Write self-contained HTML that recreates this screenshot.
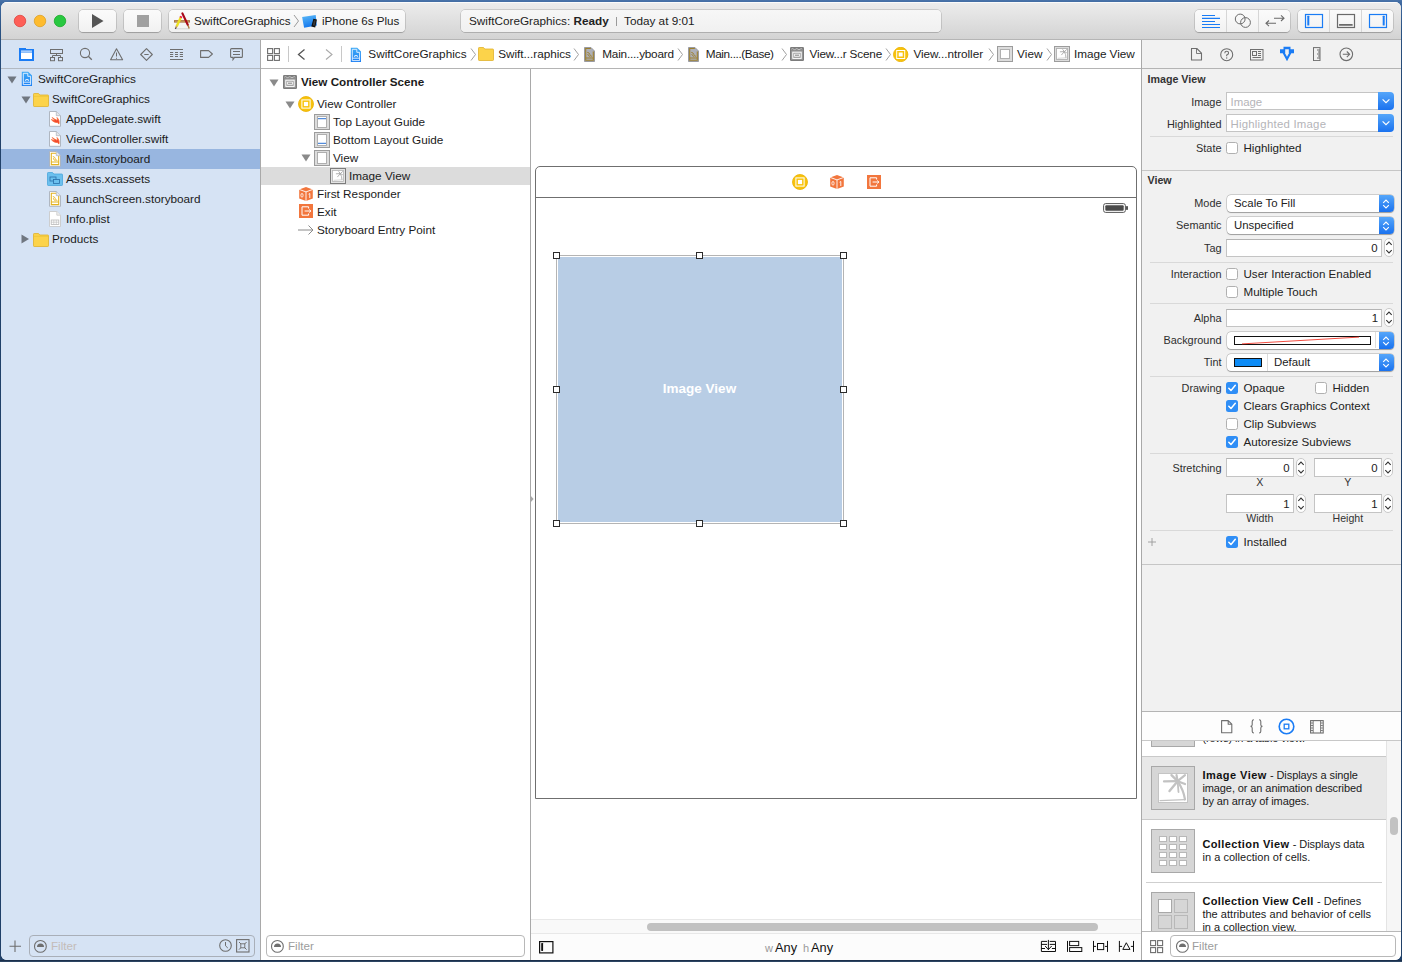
<!DOCTYPE html><html><head><meta charset="utf-8"><style>
*{margin:0;padding:0;box-sizing:border-box}
html,body{width:1402px;height:962px;overflow:hidden}
body{background:linear-gradient(to bottom,transparent 960px,#1b2f4b 960px,#1b2f4b 961px,#2c4563 961px),linear-gradient(#4a74aa 0px,#3f69a0 3px,#2a5282 30px,#214169 120px,#204068 100%);font-family:"Liberation Sans", sans-serif;position:relative}
.a{position:absolute}
.t{position:absolute;white-space:pre;line-height:20px;font-family:"Liberation Sans", sans-serif}
#win{position:absolute;left:1px;top:2px;width:1400px;height:958px;border-radius:6px;overflow:hidden;background:#fff}
#in{position:absolute;left:-1px;top:-2px;width:1402px;height:962px}
</style></head><body><div id="win"><div id="in">
<div class="a" style="left:0px;top:0px;width:1402px;height:39px;background:linear-gradient(#ececec 8%,#e6e6e6 30%,#d3d3d3)"></div>
<div class="a" style="left:0px;top:39px;width:1402px;height:1px;background:#b5b5b5"></div>
<div class="a" style="left:0px;top:2px;width:1402px;height:1px;background:#fbfbfb"></div>
<svg class="a" style="left:13px;top:14px;" width="14" height="14" viewBox="0 0 14 14"><circle cx="7" cy="7" r="5.75" fill="#fe5f57" stroke="#e0443e" stroke-width="0.8"/></svg>
<svg class="a" style="left:33px;top:14px;" width="14" height="14" viewBox="0 0 14 14"><circle cx="7" cy="7" r="5.75" fill="#febb2e" stroke="#dea123" stroke-width="0.8"/></svg>
<svg class="a" style="left:53px;top:14px;" width="14" height="14" viewBox="0 0 14 14"><circle cx="7" cy="7" r="5.75" fill="#28c840" stroke="#1aab29" stroke-width="0.8"/></svg>
<div class="a" style="left:79px;top:10px;width:37px;height:22px;border-radius:4px;background:linear-gradient(#fbfbfb,#f1f1f1);box-shadow:0 0 0 0.5px rgba(0,0,0,0.22),0 0.5px 1px rgba(0,0,0,0.18)"></div>
<svg class="a" style="left:92px;top:14px;" width="12" height="14" viewBox="0 0 12 14"><path d="M0 0 L11.5 7 L0 14Z" fill="#555"/></svg>
<div class="a" style="left:124px;top:10px;width:37px;height:22px;border-radius:4px;background:linear-gradient(#fbfbfb,#f1f1f1);box-shadow:0 0 0 0.5px rgba(0,0,0,0.22),0 0.5px 1px rgba(0,0,0,0.18)"></div>
<div class="a" style="left:137px;top:15px;width:12px;height:12px;background:#a0a0a0"></div>
<div class="a" style="left:169px;top:10px;width:236px;height:22px;border-radius:4px;background:linear-gradient(#fbfbfb,#f1f1f1);box-shadow:0 0 0 0.5px rgba(0,0,0,0.22),0 0.5px 1px rgba(0,0,0,0.18)"></div>
<svg class="a" style="left:170px;top:10px;" width="22" height="22" viewBox="0 0 22 22"><path d="M5 18.8 H19.5" stroke="#d0d0d0" stroke-width="0.9"/><rect x="4" y="10.1" width="16" height="2.5" fill="#a87440"/><rect x="5" y="10.9" width="14" height="0.9" fill="#c89a62"/><path d="M12.4 3.4 L17.8 14.9" stroke="#a80818" stroke-width="2.2" stroke-linecap="round"/><path d="M17.9 15.2 L19.2 18.6" stroke="#b07a40" stroke-width="1.4"/><path d="M10.9 7.2 L6.6 16.4" stroke="#ece020" stroke-width="2.4"/><path d="M11.3 6.3 L10.6 7.8" stroke="#f02050" stroke-width="2.5"/><path d="M6.6 16.4 L5.9 17.8" stroke="#b88a5a" stroke-width="1.8"/><path d="M5.9 17.8 L5.3 18.6" stroke="#222" stroke-width="1.4"/></svg>
<div class="t" style="left:194px;top:10.98px;font-size:11.6px;color:#202020;font-weight:400;">SwiftCoreGraphics</div>
<svg class="a" style="left:293px;top:14px;" width="7" height="14" viewBox="0 0 7 14"><path d="M1 1 L5.5 7 L1 13" fill="none" stroke="#9a9a9a" stroke-width="1"/></svg>
<svg class="a" style="left:300px;top:13px;" width="20" height="17" viewBox="0 0 20 17"><defs><linearGradient id="ipg" x1="0" y1="0" x2="0.3" y2="1"><stop offset="0" stop-color="#5cbaf7"/><stop offset="1" stop-color="#1478ee"/></linearGradient></defs><path d="M2.1 3.9 L15.7 2.1 L16.8 12.6 L4.1 14.8Z" fill="url(#ipg)"/><path d="M13.4 5.8 L16.9 6.6 L15.2 14.6 L11.3 13.5Z" fill="#111"/><path d="M14 7.2 L15.6 7.6 L14.6 12.8 L12.9 12.3Z" fill="#3a3a3a"/></svg>
<div class="t" style="left:322px;top:10.98px;font-size:11.6px;color:#202020;font-weight:400;">iPhone 6s Plus</div>
<div class="a" style="left:461px;top:10px;width:480px;height:22px;border-radius:4px;background:linear-gradient(#f7f7f7,#f0f0f0);box-shadow:0 0 0 0.5px rgba(0,0,0,0.25),0 0.5px 0.5px rgba(0,0,0,0.15)"></div>
<div class="t" style="left:469px;top:10.93px;font-size:11.75px;color:#222;font-weight:400;">SwiftCoreGraphics: <b>Ready</b></div>
<div class="a" style="left:616px;top:17px;width:1px;height:9px;background:#9a9a9a"></div>
<div class="t" style="left:624px;top:10.93px;font-size:11.75px;color:#222;font-weight:400;">Today at 9:01</div>
<div class="a" style="left:1195px;top:10px;width:95px;height:22px;border-radius:4px;background:linear-gradient(#fbfbfb,#f1f1f1);box-shadow:0 0 0 0.5px rgba(0,0,0,0.22),0 0.5px 1px rgba(0,0,0,0.18)"></div>
<div class="a" style="left:1298px;top:10px;width:95px;height:22px;border-radius:4px;background:linear-gradient(#fbfbfb,#f1f1f1);box-shadow:0 0 0 0.5px rgba(0,0,0,0.22),0 0.5px 1px rgba(0,0,0,0.18)"></div>
<div class="a" style="left:1226px;top:10px;width:1px;height:22px;background:#d6d6d6"></div>
<div class="a" style="left:1258px;top:10px;width:1px;height:22px;background:#d6d6d6"></div>
<div class="a" style="left:1329px;top:10px;width:1px;height:22px;background:#d6d6d6"></div>
<div class="a" style="left:1361px;top:10px;width:1px;height:22px;background:#d6d6d6"></div>
<svg class="a" style="left:1200px;top:13px;" width="22" height="17" viewBox="0 0 22 17"><path d="M2 2.5 H15 M2 5.4 H20 M2 8.5 H15 M2 11.5 H20 M2 14.5 H20" stroke="#1a7cf5" stroke-width="1.2"/></svg>
<svg class="a" style="left:1233px;top:12px;" width="18" height="17" viewBox="0 0 18 17"><circle cx="7.2" cy="7" r="4.9" fill="none" stroke="#6a6a6a" stroke-width="1"/><circle cx="12.5" cy="10.5" r="4.9" fill="none" stroke="#6a6a6a" stroke-width="1"/></svg>
<svg class="a" style="left:1264px;top:12px;" width="22" height="16" viewBox="0 0 22 16"><path d="M10 6.2 H20 M17 3.4 L20 6.2 L17 9" fill="none" stroke="#6a6a6a" stroke-width="1.1"/><path d="M2 11.3 H12 M5 8.5 L2 11.3 L5 14.1" fill="none" stroke="#6a6a6a" stroke-width="1.1"/></svg>
<svg class="a" style="left:1304px;top:13px;" width="20" height="16" viewBox="0 0 20 16"><rect x="1.5" y="1.5" width="17" height="13" fill="none" stroke="#1a7cf5" stroke-width="1.2"/><rect x="3.3" y="2.8" width="2" height="9.8" rx="0.5" fill="#1a7cf5"/></svg>
<svg class="a" style="left:1336px;top:13px;" width="20" height="16" viewBox="0 0 20 16"><rect x="1.5" y="1.5" width="17" height="13" fill="none" stroke="#6a6a6a" stroke-width="1.2"/><rect x="3" y="11" width="13.7" height="1.8" rx="0.5" fill="#6a6a6a"/></svg>
<svg class="a" style="left:1368px;top:13px;" width="20" height="16" viewBox="0 0 20 16"><rect x="1.5" y="1.5" width="17" height="13" fill="none" stroke="#1a7cf5" stroke-width="1.2"/><rect x="14.7" y="2.8" width="2" height="9.8" rx="0.5" fill="#1a7cf5"/></svg>
<div class="a" style="left:0px;top:40px;width:260px;height:922px;background:#d6e3f4"></div>
<div class="a" style="left:0px;top:68px;width:260px;height:1px;background:#b2b9c2"></div>
<div class="a" style="left:260px;top:40px;width:1px;height:922px;background:#a9a9a9"></div>
<svg class="a" style="left:19px;top:48px;" width="16" height="13" viewBox="0 0 16 13"><rect x="0" y="1" width="15" height="12" fill="#1a7cf5"/><rect x="0" y="0" width="7" height="2" fill="#1a7cf5"/><rect x="2" y="4.5" width="11" height="6.5" fill="#fff"/><rect x="2" y="2.6" width="11" height="1" fill="#fff"/></svg>
<svg class="a" style="left:50px;top:49px;" width="14" height="13" viewBox="0 0 14 13"><g fill="none" stroke="#6e6e6e" stroke-width="1"><rect x="0.5" y="0.5" width="12" height="4"/><path d="M6.5 4.5 V6.5 M2.5 8.5 V6.5 H10.5 V8.5"/><rect x="0.5" y="8.5" width="4" height="3.2"/><rect x="8.5" y="8.5" width="4" height="3.2"/></g></svg>
<svg class="a" style="left:79px;top:47px;" width="14" height="14" viewBox="0 0 14 14"><circle cx="6" cy="6" r="4.6" fill="none" stroke="#6e6e6e" stroke-width="1.1"/><path d="M9.3 9.3 L12.8 12.8" stroke="#6e6e6e" stroke-width="1.3"/></svg>
<svg class="a" style="left:110px;top:48px;" width="14" height="13" viewBox="0 0 14 13"><path d="M6.5 0.8 L12.6 11.8 L0.6 11.8Z" fill="none" stroke="#6e6e6e" stroke-width="1.1" stroke-linejoin="round"/><path d="M6.5 4.5 V8.5 M6.5 9.8 V10.8" stroke="#6e6e6e" stroke-width="1"/></svg>
<svg class="a" style="left:140px;top:48px;" width="14" height="14" viewBox="0 0 14 14"><path d="M6.5 0.7 L12.3 6.5 L6.5 12.3 L0.7 6.5Z" fill="none" stroke="#6e6e6e" stroke-width="1.1" stroke-linejoin="round"/><path d="M4.3 6.5 H8.7" stroke="#6e6e6e" stroke-width="1"/></svg>
<svg class="a" style="left:170px;top:48px;" width="14" height="13" viewBox="0 0 14 13"><path d="M0 1.5 H13 M0 11.5 H13" stroke="#6e6e6e" stroke-width="1"/><path d="M0 4.5 H3.2 M5 4.5 H8 M9.8 4.5 H13" stroke="#6e6e6e" stroke-width="1"/><path d="M0 6.5 H3.2 M5 6.5 H8 M9.8 6.5 H13" stroke="#6e6e6e" stroke-width="1"/><path d="M0 8.5 H3.2 M5 8.5 H8 M9.8 8.5 H13" stroke="#6e6e6e" stroke-width="1"/></svg>
<svg class="a" style="left:200px;top:50px;" width="14" height="9" viewBox="0 0 14 9"><path d="M0.6 0.6 H8.6 L12.4 4 L8.6 7.4 H0.6Z" fill="none" stroke="#6e6e6e" stroke-width="1.1" stroke-linejoin="round"/></svg>
<svg class="a" style="left:230px;top:48px;" width="14" height="13" viewBox="0 0 14 13"><path d="M1.6 0.6 H11.4 Q12.4 0.6 12.4 1.6 V8.4 Q12.4 9.4 11.4 9.4 H4.5 L3 11.6 V9.4 H1.6 Q0.6 9.4 0.6 8.4 V1.6 Q0.6 0.6 1.6 0.6Z" fill="none" stroke="#6e6e6e" stroke-width="1.1"/><path d="M3 3.5 H10 M3 6.5 H10" stroke="#6e6e6e" stroke-width="1"/></svg>
<div class="a" style="left:1px;top:149px;width:259px;height:20px;background:#98b6e0"></div>
<svg class="a" style="left:7px;top:76px;" width="10" height="8" viewBox="0 0 10 8"><path d="M0.5 0.5 L9.5 0.5 L5 7.5Z" fill="#707780"/></svg>
<svg class="a" style="left:21px;top:71px;" width="12" height="16" viewBox="0 0 12 16"><defs><linearGradient id="pjg" x1="0" y1="0" x2="0" y2="1"><stop offset="0" stop-color="#3eaaf6"/><stop offset="1" stop-color="#1a7ef4"/></linearGradient></defs><path d="M0.8 0.8 H7.2 L11 4.6 V15 H0.8Z" fill="url(#pjg)"/><path d="M2.3 2.3 H6.8 V5.3 H9.6 V13.6 H2.3Z" fill="none" stroke="#eaf4ff" stroke-width="0.9"/><path d="M2.3 11.2 H9.6" stroke="#eaf4ff" stroke-width="0.9"/><path d="M4.2 9.6 Q6 7.4 7.8 9.6" fill="none" stroke="#eaf4ff" stroke-width="1.1"/></svg>
<div class="t" style="left:38px;top:68.93px;font-size:11.75px;color:#1b1b1b;font-weight:400;">SwiftCoreGraphics</div>
<svg class="a" style="left:21px;top:96px;" width="10" height="8" viewBox="0 0 10 8"><path d="M0.5 0.5 L9.5 0.5 L5 7.5Z" fill="#707780"/></svg>
<svg class="a" style="left:33px;top:93px;" width="16" height="14" viewBox="0 0 16 14"><path d="M0.5 1.2 Q0.5 0.5 1.2 0.5 H5.5 L6.8 2 H14.8 Q15.5 2 15.5 2.7 V12.8 Q15.5 13.5 14.8 13.5 H1.2 Q0.5 13.5 0.5 12.8Z" fill="#fcd34a" stroke="#e0b12c" stroke-width="0.8"/><path d="M0.5 3.3 H15.5" stroke="#e8bf32" stroke-width="0.6"/></svg>
<div class="t" style="left:52px;top:88.93px;font-size:11.75px;color:#1b1b1b;font-weight:400;">SwiftCoreGraphics</div>
<svg class="a" style="left:49px;top:111px;" width="12" height="16" viewBox="0 0 12 16"><path d="M0.5 0.5 H7.3 L11.5 4.7 V15.3 H0.5Z" fill="#fff" stroke="#a9b0ba" stroke-width="0.9"/><path d="M7.3 0.5 V4.7 H11.5" fill="#e4e6ea" stroke="#a9b0ba" stroke-width="0.7"/><path d="M2.3 8.6 C4 10.6 6.5 11.9 8.3 11.5 C9 11.9 9.6 12.5 9.9 13.1 C10.6 10.8 9.9 8.3 8 6.5 C8.6 8.2 8.4 8.9 7.9 9.2 C6.2 8.6 4.6 7.5 3.2 6.5 C4.2 7.7 5.2 8.7 5.8 9.1 C4.6 9.2 3.4 9 2.3 8.6Z" fill="#f4482c" stroke="#f66a3a" stroke-width="0.8" stroke-linejoin="round"/></svg>
<div class="t" style="left:66px;top:108.93px;font-size:11.75px;color:#1b1b1b;font-weight:400;">AppDelegate.swift</div>
<svg class="a" style="left:49px;top:131px;" width="12" height="16" viewBox="0 0 12 16"><path d="M0.5 0.5 H7.3 L11.5 4.7 V15.3 H0.5Z" fill="#fff" stroke="#a9b0ba" stroke-width="0.9"/><path d="M7.3 0.5 V4.7 H11.5" fill="#e4e6ea" stroke="#a9b0ba" stroke-width="0.7"/><path d="M2.3 8.6 C4 10.6 6.5 11.9 8.3 11.5 C9 11.9 9.6 12.5 9.9 13.1 C10.6 10.8 9.9 8.3 8 6.5 C8.6 8.2 8.4 8.9 7.9 9.2 C6.2 8.6 4.6 7.5 3.2 6.5 C4.2 7.7 5.2 8.7 5.8 9.1 C4.6 9.2 3.4 9 2.3 8.6Z" fill="#f4482c" stroke="#f66a3a" stroke-width="0.8" stroke-linejoin="round"/></svg>
<div class="t" style="left:66px;top:128.93px;font-size:11.75px;color:#1b1b1b;font-weight:400;">ViewController.swift</div>
<svg class="a" style="left:49px;top:151px;" width="12" height="16" viewBox="0 0 12 16"><path d="M0.5 0.5 H7.3 L11.5 4.7 V15.3 H0.5Z" fill="#fff" stroke="#a9b0ba" stroke-width="0.9"/><path d="M7.3 0.5 V4.7 H11.5" fill="#e4e6ea" stroke="#a9b0ba" stroke-width="0.7"/><path d="M7 2.2 H2.3 V13.6 H9.7 V5" fill="none" stroke="#e3b320" stroke-width="1.1"/><path d="M2.3 11 H9.7" stroke="#e3b320" stroke-width="1"/><path d="M3.8 5.5 Q6 5.8 6.3 7.6 Q6.6 9.3 8.4 9.6 M4.3 7.2 Q4.6 9.3 6.8 9.9" fill="none" stroke="#e3b320" stroke-width="0.9"/></svg>
<div class="t" style="left:66px;top:148.93px;font-size:11.75px;color:#1b1b1b;font-weight:400;">Main.storyboard</div>
<svg class="a" style="left:47px;top:172px;" width="16" height="14" viewBox="0 0 16 14"><path d="M0.5 1.2 Q0.5 0.5 1.2 0.5 H5.5 L6.8 2 H14.8 Q15.5 2 15.5 2.7 V12.8 Q15.5 13.5 14.8 13.5 H1.2 Q0.5 13.5 0.5 12.8Z" fill="#6cc0ee" stroke="#4aa6dc" stroke-width="0.8"/><rect x="3" y="5" width="6" height="4" fill="none" stroke="#2a6ea8" stroke-width="0.8"/><rect x="6.5" y="7.5" width="6" height="4" fill="#6cc0ee" stroke="#2a6ea8" stroke-width="0.8"/></svg>
<div class="t" style="left:66px;top:168.93px;font-size:11.75px;color:#1b1b1b;font-weight:400;">Assets.xcassets</div>
<svg class="a" style="left:49px;top:191px;" width="12" height="16" viewBox="0 0 12 16"><path d="M0.5 0.5 H7.3 L11.5 4.7 V15.3 H0.5Z" fill="#fff" stroke="#a9b0ba" stroke-width="0.9"/><path d="M7.3 0.5 V4.7 H11.5" fill="#e4e6ea" stroke="#a9b0ba" stroke-width="0.7"/><path d="M7 2.2 H2.3 V13.6 H9.7 V5" fill="none" stroke="#e3b320" stroke-width="1.1"/><path d="M2.3 11 H9.7" stroke="#e3b320" stroke-width="1"/><path d="M3.8 5.5 Q6 5.8 6.3 7.6 Q6.6 9.3 8.4 9.6 M4.3 7.2 Q4.6 9.3 6.8 9.9" fill="none" stroke="#e3b320" stroke-width="0.9"/></svg>
<div class="t" style="left:66px;top:188.93px;font-size:11.75px;color:#1b1b1b;font-weight:400;">LaunchScreen.storyboard</div>
<svg class="a" style="left:49px;top:211px;" width="12" height="16" viewBox="0 0 12 16"><path d="M0.5 0.5 H7.8 L11.5 4.2 V15.5 H0.5Z" fill="#fff" stroke="#c9c9c9" stroke-width="0.9"/><path d="M7.8 0.5 V4.2 H11.5" fill="#eee" stroke="#c9c9c9" stroke-width="0.8"/><rect x="2.2" y="9" width="7.6" height="4.5" fill="none" stroke="#b8b8b8" stroke-width="0.8"/><path d="M2.2 11.2 H9.8 M4.8 9 V13.5 M7.3 9 V13.5" stroke="#b8b8b8" stroke-width="0.6"/></svg>
<div class="t" style="left:66px;top:208.93px;font-size:11.75px;color:#1b1b1b;font-weight:400;">Info.plist</div>
<svg class="a" style="left:21px;top:234px;" width="9" height="10" viewBox="0 0 9 10"><path d="M0.5 0.5 L8 5 L0.5 9.5Z" fill="#707780"/></svg>
<svg class="a" style="left:33px;top:233px;" width="16" height="14" viewBox="0 0 16 14"><path d="M0.5 1.2 Q0.5 0.5 1.2 0.5 H5.5 L6.8 2 H14.8 Q15.5 2 15.5 2.7 V12.8 Q15.5 13.5 14.8 13.5 H1.2 Q0.5 13.5 0.5 12.8Z" fill="#fcd34a" stroke="#e0b12c" stroke-width="0.8"/><path d="M0.5 3.3 H15.5" stroke="#e8bf32" stroke-width="0.6"/></svg>
<div class="t" style="left:52px;top:228.93px;font-size:11.75px;color:#1b1b1b;font-weight:400;">Products</div>
<svg class="a" style="left:9px;top:940px;" width="13" height="13" viewBox="0 0 13 13"><path d="M6 0.5 V12 M0.5 6.3 H12" stroke="#6e6e6e" stroke-width="1.1"/></svg>
<div class="a" style="left:29px;top:935px;width:226px;height:22px;border:1px solid #a9afb8;border-radius:4px;background:#d6e3f4"></div>
<svg class="a" style="left:33px;top:939px;" width="14" height="14" viewBox="0 0 14 14"><circle cx="7.4" cy="7.4" r="5.9" fill="none" stroke="#6e6e6e" stroke-width="1.1"/><path d="M4 7.9 A3.5 3.5 0 0 1 11 7.9Z" fill="#6e6e6e"/></svg>
<div class="t" style="left:51px;top:935.98px;font-size:11.6px;color:#c4bcb8;font-weight:400;">Filter</div>
<svg class="a" style="left:219px;top:939px;" width="14" height="14" viewBox="0 0 14 14"><circle cx="6.5" cy="6.5" r="5.8" fill="none" stroke="#6e6e6e" stroke-width="1.1"/><path d="M6.5 3 V6.8 L8.8 9" fill="none" stroke="#6e6e6e" stroke-width="1"/></svg>
<svg class="a" style="left:236px;top:939px;" width="14" height="14" viewBox="0 0 14 14"><rect x="0.6" y="0.6" width="12.4" height="12.4" fill="none" stroke="#6e6e6e" stroke-width="1.1"/><path d="M3 3 L10.6 10.6 M10.6 3 L3 10.6" stroke="#6e6e6e" stroke-width="1"/><rect x="4.8" y="4.8" width="4" height="4" fill="#d6e3f4" stroke="#6e6e6e" stroke-width="0.9"/></svg>
<div class="a" style="left:261px;top:69px;width:269px;height:866px;background:#fff"></div>
<div class="a" style="left:530px;top:68px;width:1px;height:894px;background:#a9a9a9"></div>
<div class="a" style="left:261px;top:167px;width:269px;height:18px;background:#dcdcdc"></div>
<svg class="a" style="left:269px;top:79px;" width="10" height="8" viewBox="0 0 10 8"><path d="M0.5 0.5 L9.5 0.5 L5 7.5Z" fill="#8a8a8a"/></svg>
<svg class="a" style="left:283px;top:75px;" width="14" height="14" viewBox="0 0 14 14"><rect x="0" y="0" width="14" height="14" rx="1.3" fill="#7c7c7c"/><path d="M1.3 2.2 Q2.4 1.2 3.5 2.2 T5.7 2.2 T7.9 2.2 T10.1 2.2 T12.3 2.2" fill="none" stroke="#e8e8e8" stroke-width="0.7"/><rect x="1.2" y="3.4" width="11.6" height="9.4" fill="#9c9c9c"/><rect x="2.8" y="5.2" width="8.4" height="6.2" fill="none" stroke="#fff" stroke-width="1"/><rect x="4.6" y="7.1" width="4.8" height="2.2" fill="none" stroke="#fff" stroke-width="0.8"/></svg>
<div class="t" style="left:301px;top:71.95px;font-size:11.7px;color:#1b1b1b;font-weight:400;"><b>View Controller Scene</b></div>
<svg class="a" style="left:285px;top:101px;" width="10" height="8" viewBox="0 0 10 8"><path d="M0.5 0.5 L9.5 0.5 L5 7.5Z" fill="#8a8a8a"/></svg>
<svg class="a" style="left:298px;top:96px;" width="16" height="16" viewBox="0 0 16 16"><circle cx="8" cy="8" r="7.5" fill="#f8c30c" stroke="#eab000" stroke-width="0.8"/><rect x="3.9" y="3.9" width="8.2" height="8.2" fill="none" stroke="#fff" stroke-width="1"/><rect x="5.9" y="5.9" width="4.2" height="4.2" fill="#fff"/></svg>
<div class="t" style="left:317px;top:93.93px;font-size:11.75px;color:#1b1b1b;font-weight:400;">View Controller</div>
<svg class="a" style="left:314px;top:114px;" width="16" height="16" viewBox="0 0 16 16"><rect x="0.5" y="0.5" width="15" height="15" fill="#dcdcdc" stroke="#9c9c9c" stroke-width="1"/><rect x="3.5" y="2.5" width="9" height="11" fill="#fff" stroke="#a8a8a8" stroke-width="0.9"/><rect x="4" y="4.2" width="8" height="1" fill="#2a6fd0"/></svg>
<div class="t" style="left:333px;top:111.93px;font-size:11.75px;color:#1b1b1b;font-weight:400;">Top Layout Guide</div>
<svg class="a" style="left:314px;top:132px;" width="16" height="16" viewBox="0 0 16 16"><rect x="0.5" y="0.5" width="15" height="15" fill="#dcdcdc" stroke="#9c9c9c" stroke-width="1"/><rect x="3.5" y="2.5" width="9" height="11" fill="#fff" stroke="#a8a8a8" stroke-width="0.9"/><rect x="4" y="10.8" width="8" height="1" fill="#2a6fd0"/></svg>
<div class="t" style="left:333px;top:129.93px;font-size:11.75px;color:#1b1b1b;font-weight:400;">Bottom Layout Guide</div>
<svg class="a" style="left:301px;top:154px;" width="10" height="8" viewBox="0 0 10 8"><path d="M0.5 0.5 L9.5 0.5 L5 7.5Z" fill="#8a8a8a"/></svg>
<svg class="a" style="left:314px;top:150px;" width="16" height="16" viewBox="0 0 16 16"><rect x="0.5" y="0.5" width="15" height="15" fill="#dcdcdc" stroke="#9c9c9c" stroke-width="1"/><rect x="3.5" y="2.5" width="9" height="11" fill="#fff" stroke="#a8a8a8" stroke-width="0.9"/></svg>
<div class="t" style="left:333px;top:147.93px;font-size:11.75px;color:#1b1b1b;font-weight:400;">View</div>
<svg class="a" style="left:330px;top:168px;" width="16" height="16" viewBox="0 0 16 16"><rect x="0.5" y="0.5" width="15" height="15" fill="#e4e4e4" stroke="#7c7c7c" stroke-width="1"/><rect x="2.5" y="2.5" width="11" height="11" fill="#fff" stroke="#b4b4b4" stroke-width="0.8"/><g stroke="#a8a8a8" stroke-width="0.9" fill="none" stroke-linecap="round"><path d="M10.3 5.6 L6.3 5.8 M10.3 5.6 L12.6 3.6 M10.3 5.6 L8.8 3.6 M10.3 5.6 L7.6 8.8 M10.3 5.6 L12.4 6.6 M10.3 5.6 Q12.2 8.6 12 11.8"/><path d="M4 12.3 L12 11.8" stroke="#c4c4c4" stroke-width="0.7"/></g></svg>
<div class="t" style="left:349px;top:165.93px;font-size:11.75px;color:#1b1b1b;font-weight:400;">Image View</div>
<svg class="a" style="left:298px;top:186px;" width="16" height="16" viewBox="0 0 16 16"><path d="M8 1 L14.8 3.4 V12.4 L8 15 L1.2 12.4 V3.4Z" fill="#f2763d"/><path d="M1.2 3.4 L8 5.9 L14.8 3.4 M8 5.9 V15" fill="none" stroke="#fff" stroke-width="0.9"/><ellipse cx="4" cy="9.3" rx="1.1" ry="1.9" fill="none" stroke="#fff" stroke-width="0.8"/><path d="M10.6 8.2 L11.8 7.5 V12" fill="none" stroke="#fff" stroke-width="0.9"/></svg>
<div class="t" style="left:317px;top:183.93px;font-size:11.75px;color:#1b1b1b;font-weight:400;">First Responder</div>
<svg class="a" style="left:299px;top:204px;" width="15" height="15" viewBox="0 0 15 15"><rect x="0" y="0" width="14" height="14" fill="#f2763d"/><path d="M9.6 4.5 V2.8 H3 V11.2 H9.6 V9.5" fill="none" stroke="#fff" stroke-width="1"/><path d="M5.6 7 H11.8 M10.3 5.5 L11.9 7 L10.3 8.5" fill="none" stroke="#fff" stroke-width="1"/></svg>
<div class="t" style="left:317px;top:201.93px;font-size:11.75px;color:#1b1b1b;font-weight:400;">Exit</div>
<svg class="a" style="left:298px;top:224px;" width="16" height="12" viewBox="0 0 16 12"><path d="M0 6 H15 M10.5 1.5 L15 6 L10.5 10.5" fill="none" stroke="#8a8a8a" stroke-width="1"/></svg>
<div class="t" style="left:317px;top:219.93px;font-size:11.75px;color:#1b1b1b;font-weight:400;">Storyboard Entry Point</div>
<div class="a" style="left:266px;top:935px;width:259px;height:22px;border:1px solid #b8b8b8;border-radius:4px;background:#fff"></div>
<svg class="a" style="left:270px;top:939px;" width="14" height="14" viewBox="0 0 14 14"><circle cx="7.4" cy="7.4" r="5.9" fill="none" stroke="#6e6e6e" stroke-width="1.1"/><path d="M4 7.9 A3.5 3.5 0 0 1 11 7.9Z" fill="#6e6e6e"/></svg>
<div class="t" style="left:288px;top:935.98px;font-size:11.6px;color:#9c9c9c;font-weight:400;">Filter</div>
<div class="a" style="left:261px;top:40px;width:880px;height:28px;background:#fff"></div>
<div class="a" style="left:261px;top:68px;width:880px;height:1px;background:#b4b4b4"></div>
<svg class="a" style="left:267px;top:48px;" width="14" height="14" viewBox="0 0 14 14"><rect x="0.6" y="0.6" width="5" height="5" fill="none" stroke="#6e6e6e" stroke-width="1.1"/><rect x="7.4" y="0.6" width="5" height="5" fill="none" stroke="#6e6e6e" stroke-width="1.1"/><rect x="0.6" y="7.4" width="5" height="5" fill="none" stroke="#6e6e6e" stroke-width="1.1"/><rect x="7.4" y="7.4" width="5" height="5" fill="none" stroke="#6e6e6e" stroke-width="1.1"/></svg>
<div class="a" style="left:288px;top:46px;width:1px;height:16px;background:#c8c8c8"></div>
<svg class="a" style="left:297px;top:49px;" width="9" height="11" viewBox="0 0 9 11"><path d="M7.5 0.5 L1.5 5.5 L7.5 10.5" fill="none" stroke="#555" stroke-width="1.3"/></svg>
<svg class="a" style="left:325px;top:49px;" width="9" height="11" viewBox="0 0 9 11"><path d="M1 0.5 L7 5.5 L1 10.5" fill="none" stroke="#aaa" stroke-width="1.1"/></svg>
<div class="a" style="left:341px;top:46px;width:1px;height:16px;background:#c8c8c8"></div>
<svg class="a" style="left:350px;top:46.5px;" width="12" height="16" viewBox="0 0 12 16"><defs><linearGradient id="pjg2" x1="0" y1="0" x2="0" y2="1"><stop offset="0" stop-color="#3eaaf6"/><stop offset="1" stop-color="#1a7ef4"/></linearGradient></defs><path d="M0.8 0.8 H7.2 L11 4.6 V15 H0.8Z" fill="url(#pjg2)"/><path d="M2.3 2.3 H6.8 V5.3 H9.6 V13.6 H2.3Z" fill="none" stroke="#eaf4ff" stroke-width="0.9"/><path d="M2.3 11.2 H9.6" stroke="#eaf4ff" stroke-width="0.9"/><path d="M4.2 9.6 Q6 7.4 7.8 9.6" fill="none" stroke="#eaf4ff" stroke-width="1.1"/></svg>
<div class="t" style="left:368.3px;top:43.53px;font-size:11.75px;color:#1b1b1b;font-weight:400;letter-spacing:0.022px;">SwiftCoreGraphics</div>
<svg class="a" style="left:470px;top:48px;" width="7" height="13" viewBox="0 0 7 13"><path d="M1 0.5 L5.5 6.5 L1 12.5" fill="none" stroke="#a0a0a0" stroke-width="1"/></svg>
<svg class="a" style="left:478px;top:47px;" width="16" height="14" viewBox="0 0 16 14"><path d="M0.5 1.2 Q0.5 0.5 1.2 0.5 H5.5 L6.8 2 H14.8 Q15.5 2 15.5 2.7 V12.8 Q15.5 13.5 14.8 13.5 H1.2 Q0.5 13.5 0.5 12.8Z" fill="#fcd34a" stroke="#e0b12c" stroke-width="0.8"/></svg>
<div class="t" style="left:498.2px;top:43.53px;font-size:11.75px;color:#1b1b1b;font-weight:400;letter-spacing:-0.024px;">Swift...raphics</div>
<svg class="a" style="left:573px;top:48px;" width="7" height="13" viewBox="0 0 7 13"><path d="M1 0.5 L5.5 6.5 L1 12.5" fill="none" stroke="#a0a0a0" stroke-width="1"/></svg>
<svg class="a" style="left:584px;top:47px;" width="11" height="15" viewBox="0 0 11 15"><path d="M0.5 0.5 H7 L10.5 4 V14.5 H0.5Z" fill="#aeb0b8" stroke="#8a8c92" stroke-width="0.8"/><path d="M6.8 1.5 H1.7 V13.3 H9.3 V4.5" fill="none" stroke="#9c7f2c" stroke-width="1.1"/><path d="M1.7 11 H9.3" stroke="#9c7f2c" stroke-width="1"/><path d="M3.2 5.3 Q5.5 5.6 5.8 7.4 Q6.1 9 8 9.4 M3.7 7 Q4 9 6.3 9.6" fill="none" stroke="#9c7f2c" stroke-width="0.9"/></svg>
<div class="t" style="left:602.3px;top:43.53px;font-size:11.75px;color:#1b1b1b;font-weight:400;letter-spacing:-0.212px;">Main....yboard</div>
<svg class="a" style="left:677px;top:48px;" width="7" height="13" viewBox="0 0 7 13"><path d="M1 0.5 L5.5 6.5 L1 12.5" fill="none" stroke="#a0a0a0" stroke-width="1"/></svg>
<svg class="a" style="left:688px;top:47px;" width="11" height="15" viewBox="0 0 11 15"><path d="M0.5 0.5 H7 L10.5 4 V14.5 H0.5Z" fill="#aeb0b8" stroke="#8a8c92" stroke-width="0.8"/><path d="M6.8 1.5 H1.7 V13.3 H9.3 V4.5" fill="none" stroke="#9c7f2c" stroke-width="1.1"/><path d="M1.7 11 H9.3" stroke="#9c7f2c" stroke-width="1"/><path d="M3.2 5.3 Q5.5 5.6 5.8 7.4 Q6.1 9 8 9.4 M3.7 7 Q4 9 6.3 9.6" fill="none" stroke="#9c7f2c" stroke-width="0.9"/></svg>
<div class="t" style="left:705.8px;top:43.53px;font-size:11.75px;color:#1b1b1b;font-weight:400;letter-spacing:-0.380px;">Main....(Base)</div>
<svg class="a" style="left:781px;top:48px;" width="7" height="13" viewBox="0 0 7 13"><path d="M1 0.5 L5.5 6.5 L1 12.5" fill="none" stroke="#a0a0a0" stroke-width="1"/></svg>
<svg class="a" style="left:790px;top:47px;" width="14" height="14" viewBox="0 0 14 14"><rect x="0" y="0" width="14" height="14" rx="1.3" fill="#7c7c7c"/><path d="M1.3 2.2 Q2.4 1.2 3.5 2.2 T5.7 2.2 T7.9 2.2 T10.1 2.2 T12.3 2.2" fill="none" stroke="#e8e8e8" stroke-width="0.7"/><rect x="1.2" y="3.4" width="11.6" height="9.4" fill="#9c9c9c"/><rect x="2.8" y="5.2" width="8.4" height="6.2" fill="none" stroke="#fff" stroke-width="1"/><rect x="4.6" y="7.1" width="4.8" height="2.2" fill="none" stroke="#fff" stroke-width="0.8"/></svg>
<div class="t" style="left:809.6px;top:43.53px;font-size:11.75px;color:#1b1b1b;font-weight:400;letter-spacing:-0.177px;">View...r Scene</div>
<svg class="a" style="left:885px;top:48px;" width="7" height="13" viewBox="0 0 7 13"><path d="M1 0.5 L5.5 6.5 L1 12.5" fill="none" stroke="#a0a0a0" stroke-width="1"/></svg>
<svg class="a" style="left:893px;top:47px;" width="16" height="15" viewBox="0 0 16 15"><circle cx="7.7" cy="7.5" r="7.2" fill="#f8c30c" stroke="#eab000" stroke-width="0.8"/><rect x="3.7" y="3.5" width="8" height="8" fill="none" stroke="#fff" stroke-width="1"/><rect x="5.7" y="5.5" width="4" height="4" fill="#fff"/></svg>
<div class="t" style="left:913.4px;top:43.53px;font-size:11.75px;color:#1b1b1b;font-weight:400;letter-spacing:-0.045px;">View...ntroller</div>
<svg class="a" style="left:988px;top:48px;" width="7" height="13" viewBox="0 0 7 13"><path d="M1 0.5 L5.5 6.5 L1 12.5" fill="none" stroke="#a0a0a0" stroke-width="1"/></svg>
<svg class="a" style="left:997px;top:46px;" width="16" height="16" viewBox="0 0 16 16"><rect x="0.5" y="0.5" width="15" height="15" fill="#dcdcdc" stroke="#9c9c9c" stroke-width="1"/><rect x="3.5" y="3.5" width="9" height="9" fill="#fff" stroke="#b0b0b0" stroke-width="1"/></svg>
<div class="t" style="left:1017px;top:43.53px;font-size:11.75px;color:#1b1b1b;font-weight:400;letter-spacing:0.078px;">View</div>
<svg class="a" style="left:1046px;top:48px;" width="7" height="13" viewBox="0 0 7 13"><path d="M1 0.5 L5.5 6.5 L1 12.5" fill="none" stroke="#a0a0a0" stroke-width="1"/></svg>
<svg class="a" style="left:1054px;top:46px;" width="16" height="16" viewBox="0 0 16 16"><rect x="0.5" y="0.5" width="15" height="15" fill="#dcdcdc" stroke="#9c9c9c" stroke-width="1"/><rect x="2.5" y="2.5" width="11" height="11" fill="#fff" stroke="#b0b0b0" stroke-width="0.9"/><g stroke="#a8a8a8" stroke-width="0.9" fill="none" stroke-linecap="round"><path d="M10.3 5.6 L6.3 5.8 M10.3 5.6 L12.6 3.6 M10.3 5.6 L8.8 3.6 M10.3 5.6 L7.6 8.8 M10.3 5.6 L12.4 6.6 M10.3 5.6 Q12.2 8.6 12 11.8"/><path d="M4 12.3 L12 11.8" stroke="#c4c4c4" stroke-width="0.7"/></g></svg>
<div class="t" style="left:1074px;top:43.53px;font-size:11.75px;color:#1b1b1b;font-weight:400;letter-spacing:-0.054px;">Image View</div>
<div class="a" style="left:531px;top:69px;width:610px;height:865px;background:#fff"></div>
<div class="a" style="left:535px;top:166px;width:602px;height:633px;border:1px solid #6f6f6f;border-radius:5px 5px 0 0;background:#fff"></div>
<div class="a" style="left:536px;top:197px;width:600px;height:1px;background:#6f6f6f"></div>
<svg class="a" style="left:792px;top:174px;" width="16" height="16" viewBox="0 0 16 16"><circle cx="8" cy="8" r="7.5" fill="#f8c30c" stroke="#eab000" stroke-width="0.8"/><rect x="3.9" y="3.9" width="8.2" height="8.2" fill="none" stroke="#fff" stroke-width="1"/><rect x="5.9" y="5.9" width="4.2" height="4.2" fill="#fff"/></svg>
<svg class="a" style="left:829px;top:174px;" width="16" height="16" viewBox="0 0 16 16"><path d="M8 1 L14.8 3.4 V12.4 L8 15 L1.2 12.4 V3.4Z" fill="#f2763d"/><path d="M1.2 3.4 L8 5.9 L14.8 3.4 M8 5.9 V15" fill="none" stroke="#fff" stroke-width="0.9"/><ellipse cx="4" cy="9.3" rx="1.1" ry="1.9" fill="none" stroke="#fff" stroke-width="0.8"/><path d="M10.6 8.2 L11.8 7.5 V12" fill="none" stroke="#fff" stroke-width="0.9"/></svg>
<svg class="a" style="left:867px;top:175px;" width="14" height="14" viewBox="0 0 14 14"><rect x="0" y="0" width="14" height="14" fill="#f2763d"/><path d="M9.6 4.5 V2.8 H3 V11.2 H9.6 V9.5" fill="none" stroke="#fff" stroke-width="1"/><path d="M5.6 7 H11.8 M10.3 5.5 L11.9 7 L10.3 8.5" fill="none" stroke="#fff" stroke-width="1"/></svg>
<svg class="a" style="left:1103px;top:203px;" width="26" height="10" viewBox="0 0 26 10"><rect x="0.6" y="0.6" width="21.8" height="8.8" rx="2" fill="#fff" stroke="#555" stroke-width="1"/><rect x="2.3" y="2.3" width="18.4" height="5.4" rx="1" fill="#4a4a4a"/><rect x="23" y="3" width="2" height="4" rx="0.8" fill="#555"/></svg>
<div class="a" style="left:556px;top:255px;width:288px;height:269px;border:1px solid #b4b4b4;background:#fff"></div>
<div class="a" style="left:558px;top:257px;width:284px;height:265px;background:#b8cde5"></div>
<div class="t" style="left:499.5px;width:400px;text-align:center;top:379.32px;font-size:13.5px;color:#fff;font-weight:400;"><b>Image View</b></div>
<div class="a" style="left:553.0px;top:252.0px;width:7px;height:7px;border:1px solid #2b2b2b;background:#fff"></div>
<div class="a" style="left:553.0px;top:386.0px;width:7px;height:7px;border:1px solid #2b2b2b;background:#fff"></div>
<div class="a" style="left:553.0px;top:520.0px;width:7px;height:7px;border:1px solid #2b2b2b;background:#fff"></div>
<div class="a" style="left:696.0px;top:252.0px;width:7px;height:7px;border:1px solid #2b2b2b;background:#fff"></div>
<div class="a" style="left:696.0px;top:520.0px;width:7px;height:7px;border:1px solid #2b2b2b;background:#fff"></div>
<div class="a" style="left:840.0px;top:252.0px;width:7px;height:7px;border:1px solid #2b2b2b;background:#fff"></div>
<div class="a" style="left:840.0px;top:386.0px;width:7px;height:7px;border:1px solid #2b2b2b;background:#fff"></div>
<div class="a" style="left:840.0px;top:520.0px;width:7px;height:7px;border:1px solid #2b2b2b;background:#fff"></div>
<svg class="a" style="left:530px;top:495px;" width="5" height="8" viewBox="0 0 5 8"><path d="M0 0 L3.6 4 L0 8Z" fill="#a8a8a8"/></svg>
<div class="a" style="left:531px;top:919px;width:610px;height:15px;background:#f9f9f9;border-top:1px solid #e8e8e8;border-bottom:1px solid #e8e8e8"></div>
<div class="a" style="left:647px;top:923px;width:451px;height:8px;background:#c1c1c1;border-radius:4px"></div>
<div class="a" style="left:531px;top:934px;width:610px;height:28px;background:#fcfcfc"></div>
<svg class="a" style="left:539px;top:941px;" width="15" height="13" viewBox="0 0 15 13"><rect x="0.6" y="0.6" width="13.3" height="11.3" fill="none" stroke="#111" stroke-width="1.2"/><rect x="2.2" y="2.1" width="1.9" height="7.8" rx="0.4" fill="#111"/></svg>
<div class="t" style="left:765px;top:938.19px;font-size:11px;color:#9a9a9a;font-weight:400;">w</div>
<div class="t" style="left:775px;top:937.56px;font-size:12.8px;color:#111;font-weight:400;">Any</div>
<div class="t" style="left:803px;top:938.19px;font-size:11px;color:#9a9a9a;font-weight:400;">h</div>
<div class="t" style="left:811px;top:937.56px;font-size:12.8px;color:#111;font-weight:400;">Any</div>
<svg class="a" style="left:1038px;top:936px;" width="100" height="20" viewBox="0 0 100 20"><g fill="none" stroke="#111" stroke-width="1" stroke-linecap="round"><path d="M8.7 5.4 H3.4 V15.5 H17.5 V5.4 H12.1 M3.4 8.4 H8.7 M12.1 8.4 H17.5 M3.4 12.5 H6.6 M14.3 12.5 H17.5"/><path d="M10.4 4.3 V13.6 M7.4 10.3 L10.4 13.6 L13.4 10.3"/><path d="M29.5 5.3 V15.5"/><rect x="31.6" y="5.4" width="9.1" height="4.2"/><rect x="31.6" y="11.6" width="12.2" height="3.9"/><path d="M55.5 5.3 V15.5 M55.5 10.4 H57.7 M69.5 5.3 V15.5 M67.3 10.4 H69.5"/><rect x="59.5" y="7.5" width="6.2" height="6.1"/><path d="M81.4 5.3 V15.5 M81.4 10.4 H83.7 M95.5 5.3 V15.5 M93.3 10.4 H95.5"/><path d="M88.5 7.1 L92 13.4 H85.2Z" stroke-linejoin="round"/></g></svg>
<div class="a" style="left:1142px;top:40px;width:260px;height:671px;background:#f1f1f1"></div>
<div class="a" style="left:1142px;top:68px;width:260px;height:1px;background:#b4b4b4"></div>
<div class="a" style="left:1141px;top:40px;width:1px;height:922px;background:#a9a9a9"></div>
<svg class="a" style="left:1190px;top:48px;" width="13" height="13" viewBox="0 0 13 13"><path d="M1.5 0.5 H6.8 L11.5 5.2 V12 H1.5Z" fill="none" stroke="#6e6e6e" stroke-width="1.1" stroke-linejoin="round"/><path d="M6.5 1 V5.5 H11" fill="none" stroke="#6e6e6e" stroke-width="0.9"/></svg>
<svg class="a" style="left:1220px;top:48px;" width="14" height="14" viewBox="0 0 14 14"><circle cx="6.7" cy="6.7" r="6" fill="none" stroke="#6e6e6e" stroke-width="1.1"/><path d="M4.8 5.2 Q4.8 3.3 6.7 3.3 Q8.6 3.3 8.6 5 Q8.6 6.2 6.7 7 V8.3" fill="none" stroke="#6e6e6e" stroke-width="1.1"/><circle cx="6.7" cy="10" r="0.7" fill="#6e6e6e"/></svg>
<svg class="a" style="left:1250px;top:49px;" width="14" height="12" viewBox="0 0 14 12"><g fill="none" stroke="#6e6e6e" stroke-width="1"><rect x="0.5" y="0.5" width="12.5" height="10.5"/><rect x="2.5" y="2.5" width="4" height="4"/><path d="M8 2.5 H11 M8 4.5 H11 M8 6.5 H11 M2.5 8.5 H11"/></g></svg>
<svg class="a" style="left:1279px;top:46px;" width="16" height="16" viewBox="0 0 16 16"><path d="M4.5 0.8 H11.5 V3.3 H15 V7.2 H12.3 L8 15.3 L3.7 7.2 H1 V3.3 H4.5Z" fill="#1a7cf5"/><path d="M6.2 3.2 H9.8 V7.4 L8 10.8 L6.2 7.4Z" fill="#f0f0f0"/></svg>
<svg class="a" style="left:1313px;top:47px;" width="8" height="14" viewBox="0 0 8 14"><g fill="none" stroke="#6e6e6e" stroke-width="1"><rect x="0.5" y="0.6" width="6.5" height="13"/><path d="M4 3 H7 M5 5 H7 M4 7 H7 M5 9 H7 M4 11 H7"/></g></svg>
<svg class="a" style="left:1339px;top:47px;" width="15" height="15" viewBox="0 0 15 15"><circle cx="7.3" cy="7.3" r="6.3" fill="none" stroke="#6e6e6e" stroke-width="1.1"/><path d="M3.8 7.3 H10.5 M7.8 4.5 L10.6 7.3 L7.8 10.1" fill="none" stroke="#6e6e6e" stroke-width="1.1"/></svg>
<div class="t" style="left:1147.5px;top:68.69px;font-size:10.7px;color:#333;font-weight:400;"><b>Image View</b></div>
<div class="t" style="left:821.5px;width:400px;text-align:right;top:92.22px;font-size:10.9px;color:#2e2e2e;font-weight:400;">Image</div>
<div class="a" style="left:1226px;top:92px;width:152px;height:18px;border:1px solid #c4c4c4;border-right:none;background:#fff"></div>
<div class="a" style="left:1378px;top:92px;width:16px;height:18px;border-radius:0 4px 4px 0;background:linear-gradient(#55a6fa,#1a72ef)"></div>
<svg class="a" style="left:1382px;top:97px;" width="8" height="8" viewBox="0 0 8 8"><path d="M0.6 2.4 L4 5.6 L7.4 2.4" fill="none" stroke="#fff" stroke-width="1.2"/></svg>
<div class="t" style="left:1230.5px;top:92.05px;font-size:11.4px;color:#b4b4b8;font-weight:400;">Image</div>
<div class="t" style="left:821.5px;width:400px;text-align:right;top:114.22px;font-size:10.9px;color:#2e2e2e;font-weight:400;">Highlighted</div>
<div class="a" style="left:1226px;top:114px;width:152px;height:18px;border:1px solid #c4c4c4;border-right:none;background:#fff"></div>
<div class="a" style="left:1378px;top:114px;width:16px;height:18px;border-radius:0 4px 4px 0;background:linear-gradient(#55a6fa,#1a72ef)"></div>
<svg class="a" style="left:1382px;top:119px;" width="8" height="8" viewBox="0 0 8 8"><path d="M0.6 2.4 L4 5.6 L7.4 2.4" fill="none" stroke="#fff" stroke-width="1.2"/></svg>
<div class="t" style="left:1230.5px;top:114.05px;font-size:11.4px;color:#b4b4b8;font-weight:400;letter-spacing:0.229px;">Highlighted Image</div>
<div class="a" style="left:1150px;top:136px;width:243px;height:1px;background:#d9d9d9"></div>
<div class="t" style="left:821.5px;width:400px;text-align:right;top:137.92px;font-size:10.9px;color:#2e2e2e;font-weight:400;">State</div>
<div class="a" style="left:1226px;top:142px;width:12px;height:12px;border:1px solid #b0b0b0;border-radius:2.5px;background:#fff"></div>
<div class="t" style="left:1243.5px;top:137.68px;font-size:11.6px;color:#222;font-weight:400;">Highlighted</div>
<div class="a" style="left:1142px;top:170px;width:259px;height:1px;background:#c6c6c6"></div>
<div class="t" style="left:1147.5px;top:170.29px;font-size:10.7px;color:#333;font-weight:400;"><b>View</b></div>
<div class="t" style="left:821.5px;width:400px;text-align:right;top:192.72px;font-size:10.9px;color:#2e2e2e;font-weight:400;">Mode</div>
<div class="a" style="left:1226.5px;top:194.5px;width:167px;height:17px;border-radius:4px;background:#fff;box-shadow:0 0 0 0.5px rgba(0,0,0,0.25),0 0.6px 1px rgba(0,0,0,0.25)"></div>
<div class="a" style="left:1379px;top:194.5px;width:14.5px;height:17px;border-radius:0 4px 4px 0;background:linear-gradient(#55a6fa,#1a72ef)"></div>
<svg class="a" style="left:1382px;top:197.5px;" width="8" height="12" viewBox="0 0 8 12"><path d="M1.2 4.8 L4 2 L6.8 4.8 M1.2 7.2 L4 10 L6.8 7.2" fill="none" stroke="#fff" stroke-width="1.1"/></svg>
<div class="t" style="left:1234px;top:192.55px;font-size:11.4px;color:#222;font-weight:400;">Scale To Fill</div>
<div class="t" style="left:821.5px;width:400px;text-align:right;top:215.22px;font-size:10.9px;color:#2e2e2e;font-weight:400;">Semantic</div>
<div class="a" style="left:1226.5px;top:216.5px;width:167px;height:17px;border-radius:4px;background:#fff;box-shadow:0 0 0 0.5px rgba(0,0,0,0.25),0 0.6px 1px rgba(0,0,0,0.25)"></div>
<div class="a" style="left:1379px;top:216.5px;width:14.5px;height:17px;border-radius:0 4px 4px 0;background:linear-gradient(#55a6fa,#1a72ef)"></div>
<svg class="a" style="left:1382px;top:219.5px;" width="8" height="12" viewBox="0 0 8 12"><path d="M1.2 4.8 L4 2 L6.8 4.8 M1.2 7.2 L4 10 L6.8 7.2" fill="none" stroke="#fff" stroke-width="1.1"/></svg>
<div class="t" style="left:1234px;top:215.05px;font-size:11.4px;color:#222;font-weight:400;">Unspecified</div>
<div class="t" style="left:821.5px;width:400px;text-align:right;top:237.82px;font-size:10.9px;color:#2e2e2e;font-weight:400;">Tag</div>
<div class="a" style="left:1226px;top:238.5px;width:156px;height:18px;border:1px solid #c4c4c4;border-top-color:#b4b4b4;background:#fff"></div>
<div class="t" style="left:977.5px;width:400px;text-align:right;top:237.65px;font-size:11.4px;color:#222;font-weight:400;">0</div>
<svg class="a" style="left:1383.5px;top:238px;" width="10" height="19" viewBox="0 0 10 19"><rect x="0.5" y="0.5" width="9" height="18" rx="4.5" fill="#fff" stroke="#c2c2c2" stroke-width="0.9"/><path d="M2.3 6.8 L5 4.1 L7.7 6.8 M2.3 12.2 L5 14.9 L7.7 12.2" fill="none" stroke="#333" stroke-width="1.1"/></svg>
<div class="a" style="left:1150px;top:262px;width:243px;height:1px;background:#d9d9d9"></div>
<div class="t" style="left:821.5px;width:400px;text-align:right;top:263.82px;font-size:10.9px;color:#2e2e2e;font-weight:400;">Interaction</div>
<div class="a" style="left:1226px;top:268px;width:12px;height:12px;border:1px solid #b0b0b0;border-radius:2.5px;background:#fff"></div>
<div class="t" style="left:1243.5px;top:263.58px;font-size:11.6px;color:#222;font-weight:400;">User Interaction Enabled</div>
<div class="a" style="left:1226px;top:286px;width:12px;height:12px;border:1px solid #b0b0b0;border-radius:2.5px;background:#fff"></div>
<div class="t" style="left:1243.5px;top:281.78px;font-size:11.6px;color:#222;font-weight:400;">Multiple Touch</div>
<div class="a" style="left:1150px;top:303px;width:243px;height:1px;background:#d9d9d9"></div>
<div class="t" style="left:821.5px;width:400px;text-align:right;top:308.12px;font-size:10.9px;color:#2e2e2e;font-weight:400;">Alpha</div>
<div class="a" style="left:1226px;top:309px;width:156px;height:18px;border:1px solid #c4c4c4;border-top-color:#b4b4b4;background:#fff"></div>
<div class="t" style="left:978px;width:400px;text-align:right;top:307.95px;font-size:11.4px;color:#222;font-weight:400;">1</div>
<svg class="a" style="left:1383.5px;top:308px;" width="10" height="19" viewBox="0 0 10 19"><rect x="0.5" y="0.5" width="9" height="18" rx="4.5" fill="#fff" stroke="#c2c2c2" stroke-width="0.9"/><path d="M2.3 6.8 L5 4.1 L7.7 6.8 M2.3 12.2 L5 14.9 L7.7 12.2" fill="none" stroke="#333" stroke-width="1.1"/></svg>
<div class="t" style="left:821.5px;width:400px;text-align:right;top:330.22px;font-size:10.9px;color:#2e2e2e;font-weight:400;">Background</div>
<div class="a" style="left:1226.5px;top:331.5px;width:167px;height:17px;border-radius:4px;background:#fff;box-shadow:0 0 0 0.5px rgba(0,0,0,0.25),0 0.6px 1px rgba(0,0,0,0.25)"></div>
<div class="a" style="left:1379px;top:331.5px;width:14.5px;height:17px;border-radius:0 4px 4px 0;background:linear-gradient(#55a6fa,#1a72ef)"></div>
<svg class="a" style="left:1382px;top:334.5px;" width="8" height="12" viewBox="0 0 8 12"><path d="M1.2 4.8 L4 2 L6.8 4.8 M1.2 7.2 L4 10 L6.8 7.2" fill="none" stroke="#fff" stroke-width="1.1"/></svg>
<svg class="a" style="left:1234px;top:335.5px;" width="137" height="9" viewBox="0 0 137 9"><rect x="0.5" y="0.5" width="136" height="8" fill="#fff" stroke="#111" stroke-width="1"/><path d="M8 7.9 L125 1.1" stroke="#f02010" stroke-width="0.8"/></svg>
<div class="a" style="left:1375px;top:332px;width:1px;height:16px;background:#dedede"></div>
<div class="t" style="left:821.5px;width:400px;text-align:right;top:352.22px;font-size:10.9px;color:#2e2e2e;font-weight:400;">Tint</div>
<div class="a" style="left:1226.5px;top:354px;width:167px;height:17px;border-radius:4px;background:#fff;box-shadow:0 0 0 0.5px rgba(0,0,0,0.25),0 0.6px 1px rgba(0,0,0,0.25)"></div>
<div class="a" style="left:1379px;top:354px;width:14.5px;height:17px;border-radius:0 4px 4px 0;background:linear-gradient(#55a6fa,#1a72ef)"></div>
<svg class="a" style="left:1382px;top:357px;" width="8" height="12" viewBox="0 0 8 12"><path d="M1.2 4.8 L4 2 L6.8 4.8 M1.2 7.2 L4 10 L6.8 7.2" fill="none" stroke="#fff" stroke-width="1.1"/></svg>
<svg class="a" style="left:1234px;top:357.5px;" width="28" height="9" viewBox="0 0 28 9"><rect x="0.5" y="0.5" width="27" height="8" fill="#0e8cf6" stroke="#111" stroke-width="1"/></svg>
<div class="a" style="left:1267px;top:354px;width:1px;height:17px;background:#dcdcdc"></div>
<div class="t" style="left:1274px;top:352.05px;font-size:11.4px;color:#222;font-weight:400;">Default</div>
<div class="a" style="left:1150px;top:376px;width:243px;height:1px;background:#d9d9d9"></div>
<div class="t" style="left:821.5px;width:400px;text-align:right;top:378.12px;font-size:10.9px;color:#2e2e2e;font-weight:400;">Drawing</div>
<svg class="a" style="left:1226px;top:382px;" width="12" height="12" viewBox="0 0 12 12"><rect x="0" y="0" width="12" height="12" rx="2.5" fill="#2f8ef6"/><path d="M2.8 6.2 L5 8.5 L9.3 3.3" fill="none" stroke="#fff" stroke-width="1.5" stroke-linecap="round" stroke-linejoin="round"/></svg>
<div class="t" style="left:1243.5px;top:377.88px;font-size:11.6px;color:#222;font-weight:400;">Opaque</div>
<div class="a" style="left:1315px;top:382px;width:12px;height:12px;border:1px solid #b0b0b0;border-radius:2.5px;background:#fff"></div>
<div class="t" style="left:1332.5px;top:377.88px;font-size:11.6px;color:#222;font-weight:400;">Hidden</div>
<svg class="a" style="left:1226px;top:400px;" width="12" height="12" viewBox="0 0 12 12"><rect x="0" y="0" width="12" height="12" rx="2.5" fill="#2f8ef6"/><path d="M2.8 6.2 L5 8.5 L9.3 3.3" fill="none" stroke="#fff" stroke-width="1.5" stroke-linecap="round" stroke-linejoin="round"/></svg>
<div class="t" style="left:1243.5px;top:396.48px;font-size:11.6px;color:#222;font-weight:400;">Clears Graphics Context</div>
<div class="a" style="left:1226px;top:418px;width:12px;height:12px;border:1px solid #b0b0b0;border-radius:2.5px;background:#fff"></div>
<div class="t" style="left:1243.5px;top:414.48px;font-size:11.6px;color:#222;font-weight:400;">Clip Subviews</div>
<svg class="a" style="left:1226px;top:436px;" width="12" height="12" viewBox="0 0 12 12"><rect x="0" y="0" width="12" height="12" rx="2.5" fill="#2f8ef6"/><path d="M2.8 6.2 L5 8.5 L9.3 3.3" fill="none" stroke="#fff" stroke-width="1.5" stroke-linecap="round" stroke-linejoin="round"/></svg>
<div class="t" style="left:1243.5px;top:432.28px;font-size:11.6px;color:#222;font-weight:400;">Autoresize Subviews</div>
<div class="a" style="left:1150px;top:453px;width:243px;height:1px;background:#d9d9d9"></div>
<div class="t" style="left:821.5px;width:400px;text-align:right;top:458.22px;font-size:10.9px;color:#2e2e2e;font-weight:400;">Stretching</div>
<div class="a" style="left:1226px;top:458px;width:68px;height:18.5px;border:1px solid #c4c4c4;border-top-color:#b4b4b4;background:#fff"></div>
<div class="t" style="left:889.5px;width:400px;text-align:right;top:457.85px;font-size:11.4px;color:#222;font-weight:400;">0</div>
<svg class="a" style="left:1296px;top:458px;" width="10" height="19" viewBox="0 0 10 19"><rect x="0.5" y="0.5" width="9" height="18" rx="4.5" fill="#fff" stroke="#c2c2c2" stroke-width="0.9"/><path d="M2.3 6.8 L5 4.1 L7.7 6.8 M2.3 12.2 L5 14.9 L7.7 12.2" fill="none" stroke="#333" stroke-width="1.1"/></svg>
<div class="a" style="left:1314px;top:458px;width:68px;height:18.5px;border:1px solid #c4c4c4;border-top-color:#b4b4b4;background:#fff"></div>
<div class="t" style="left:977.5px;width:400px;text-align:right;top:457.85px;font-size:11.4px;color:#222;font-weight:400;">0</div>
<svg class="a" style="left:1383px;top:458px;" width="10" height="19" viewBox="0 0 10 19"><rect x="0.5" y="0.5" width="9" height="18" rx="4.5" fill="#fff" stroke="#c2c2c2" stroke-width="0.9"/><path d="M2.3 6.8 L5 4.1 L7.7 6.8 M2.3 12.2 L5 14.9 L7.7 12.2" fill="none" stroke="#333" stroke-width="1.1"/></svg>
<div class="t" style="left:1059.8px;width:400px;text-align:center;top:472.13px;font-size:10.6px;color:#333;font-weight:400;">X</div>
<div class="t" style="left:1147.8px;width:400px;text-align:center;top:472.13px;font-size:10.6px;color:#333;font-weight:400;">Y</div>
<div class="a" style="left:1226px;top:494px;width:68px;height:18.5px;border:1px solid #c4c4c4;border-top-color:#b4b4b4;background:#fff"></div>
<div class="t" style="left:889.5px;width:400px;text-align:right;top:493.85px;font-size:11.4px;color:#222;font-weight:400;">1</div>
<svg class="a" style="left:1296px;top:493.5px;" width="10" height="19" viewBox="0 0 10 19"><rect x="0.5" y="0.5" width="9" height="18" rx="4.5" fill="#fff" stroke="#c2c2c2" stroke-width="0.9"/><path d="M2.3 6.8 L5 4.1 L7.7 6.8 M2.3 12.2 L5 14.9 L7.7 12.2" fill="none" stroke="#333" stroke-width="1.1"/></svg>
<div class="a" style="left:1314px;top:494px;width:68px;height:18.5px;border:1px solid #c4c4c4;border-top-color:#b4b4b4;background:#fff"></div>
<div class="t" style="left:977.5px;width:400px;text-align:right;top:493.85px;font-size:11.4px;color:#222;font-weight:400;">1</div>
<svg class="a" style="left:1383px;top:493.5px;" width="10" height="19" viewBox="0 0 10 19"><rect x="0.5" y="0.5" width="9" height="18" rx="4.5" fill="#fff" stroke="#c2c2c2" stroke-width="0.9"/><path d="M2.3 6.8 L5 4.1 L7.7 6.8 M2.3 12.2 L5 14.9 L7.7 12.2" fill="none" stroke="#333" stroke-width="1.1"/></svg>
<div class="t" style="left:1059.8px;width:400px;text-align:center;top:508.13px;font-size:10.6px;color:#333;font-weight:400;">Width</div>
<div class="t" style="left:1147.8px;width:400px;text-align:center;top:508.13px;font-size:10.6px;color:#333;font-weight:400;">Height</div>
<div class="a" style="left:1150px;top:530px;width:243px;height:1px;background:#d9d9d9"></div>
<svg class="a" style="left:1147px;top:537px;" width="10" height="10" viewBox="0 0 10 10"><path d="M5 1 V9 M1 5 H9" stroke="#9a9a9a" stroke-width="0.9"/></svg>
<svg class="a" style="left:1226px;top:536px;" width="12" height="12" viewBox="0 0 12 12"><rect x="0" y="0" width="12" height="12" rx="2.5" fill="#2f8ef6"/><path d="M2.8 6.2 L5 8.5 L9.3 3.3" fill="none" stroke="#fff" stroke-width="1.5" stroke-linecap="round" stroke-linejoin="round"/></svg>
<div class="t" style="left:1243.5px;top:531.78px;font-size:11.6px;color:#222;font-weight:400;">Installed</div>
<div class="a" style="left:1142px;top:564px;width:259px;height:1px;background:#c6c6c6"></div>
<div class="a" style="left:1142px;top:711px;width:259px;height:1px;background:#b4b4b4"></div>
<div class="a" style="left:1142px;top:712px;width:259px;height:28px;background:#fdfdfd"></div>
<div class="a" style="left:1142px;top:740px;width:259px;height:1px;background:#c8c8c8"></div>
<svg class="a" style="left:1221px;top:720px;" width="12" height="14" viewBox="0 0 12 14"><path d="M0.6 0.6 H7.2 L10.8 4.2 V12.8 H0.6Z M7.2 0.6 V4.2 H10.8" fill="none" stroke="#6e6e6e" stroke-width="1.1" stroke-linejoin="round"/></svg>
<svg class="a" style="left:1250px;top:719px;" width="13" height="15" viewBox="0 0 13 15"><path d="M4 0.8 Q2.2 0.8 2.2 2.6 V5.8 Q2.2 7.2 0.6 7.4 Q2.2 7.6 2.2 9 V12.2 Q2.2 14 4 14 M9 0.8 Q10.8 0.8 10.8 2.6 V5.8 Q10.8 7.2 12.4 7.4 Q10.8 7.6 10.8 9 V12.2 Q10.8 14 9 14" fill="none" stroke="#6e6e6e" stroke-width="1.1"/></svg>
<svg class="a" style="left:1278px;top:718px;" width="17" height="17" viewBox="0 0 17 17"><circle cx="8.5" cy="8.5" r="7.3" fill="none" stroke="#1a7cf5" stroke-width="1.6"/><rect x="6.2" y="6.2" width="4.6" height="4.6" fill="none" stroke="#1a7cf5" stroke-width="1.3"/></svg>
<svg class="a" style="left:1310px;top:720px;" width="14" height="14" viewBox="0 0 14 14"><rect x="0.6" y="0.6" width="12.6" height="12.4" fill="none" stroke="#6e6e6e" stroke-width="1.1"/><path d="M3.2 0.6 V13 M10.6 0.6 V13" stroke="#6e6e6e" stroke-width="0.9"/><path d="M1 3 H3 M1 5.5 H3 M1 8 H3 M1 10.5 H3 M10.8 3 H12.8 M10.8 5.5 H12.8 M10.8 8 H12.8 M10.8 10.5 H12.8" stroke="#6e6e6e" stroke-width="0.9"/></svg>
<div class="a" style="left:1142px;top:741px;width:244px;height:190px;background:#fff"></div>
<div class="a" style="left:1386px;top:741px;width:15px;height:190px;background:#f6f6f6;border-left:1px solid #e4e4e4"></div>
<div class="a" style="left:1390px;top:817px;width:8px;height:18px;background:#c2c2c2;border-radius:4px"></div>
<div class="a" style="left:1142px;top:741px;width:244px;height:15px;overflow:hidden">
<div class="a" style="left:9px;top:-30px;width:44px;height:36px;background:#d6d6d6;border:1px solid #a8a8a8"></div>
<div class="t" style="left:60.4px;top:-13.41px;font-size:11px;color:#1a1a1a;font-weight:400;letter-spacing:-0.144px;">(rows) in a table view.</div>
</div>
<div class="a" style="left:1142px;top:756px;width:244px;height:1px;background:#c9c9c9"></div>
<div class="a" style="left:1142px;top:757px;width:244px;height:62px;background:#e8e8e8"></div>
<div class="a" style="left:1142px;top:819px;width:244px;height:1px;background:#c9c9c9"></div>
<div class="a" style="left:1151px;top:766px;width:44px;height:44px;background:#d6d6d6;border:1px solid #a8a8a8"></div>
<div class="a" style="left:1158px;top:773px;width:30px;height:30px;background:#fff;border:1px solid #c4c4c4"></div>
<svg class="a" style="left:1158px;top:773px;" width="30" height="30" viewBox="0 0 30 30"><g stroke="#c2c2c2" stroke-linecap="round" fill="none"><path d="M19.6 8.2 L6 8.4" stroke-width="2.2"/><path d="M19.6 8.2 L13.5 2.2" stroke-width="2.4"/><path d="M19.6 8.2 L18.5 2" stroke-width="2.2"/><path d="M19.6 8.2 L27 2.2" stroke-width="2.2"/><path d="M19.6 8.2 L27 11" stroke-width="2.2"/><path d="M19.6 8.2 L11.5 18" stroke-width="2.4"/><path d="M19.6 8.2 L20.5 19" stroke-width="1.8"/><path d="M19.6 8.2 Q25.5 17 27 26.5" stroke-width="2.2"/><path d="M2 27.6 L27 26.6" stroke-width="1.2"/></g></svg>
<div class="t" style="left:1202.4px;top:765.19px;font-size:11px;color:#111;font-weight:400;letter-spacing:0.476px;"><b>Image View</b></div>
<div class="t" style="left:1269.9px;top:765.19px;font-size:11px;color:#1a1a1a;font-weight:400;letter-spacing:-0.070px;">- Displays a single</div>
<div class="t" style="left:1202.4px;top:777.99px;font-size:11px;color:#1a1a1a;font-weight:400;letter-spacing:-0.095px;">image, or an animation described</div>
<div class="t" style="left:1202.4px;top:790.79px;font-size:11px;color:#1a1a1a;font-weight:400;letter-spacing:-0.097px;">by an array of images.</div>
<div class="a" style="left:1151px;top:829px;width:44px;height:44px;background:#d6d6d6;border:1px solid #a8a8a8"></div>
<div class="a" style="left:1159px;top:836px;width:8px;height:6px;background:#fff;border:1px solid #b8b8b8"></div>
<div class="a" style="left:1159px;top:844px;width:8px;height:6px;background:#fff;border:1px solid #b8b8b8"></div>
<div class="a" style="left:1159px;top:852px;width:8px;height:6px;background:#fff;border:1px solid #b8b8b8"></div>
<div class="a" style="left:1159px;top:860px;width:8px;height:6px;background:#fff;border:1px solid #b8b8b8"></div>
<div class="a" style="left:1169px;top:836px;width:8px;height:6px;background:#fff;border:1px solid #b8b8b8"></div>
<div class="a" style="left:1169px;top:844px;width:8px;height:6px;background:#fff;border:1px solid #b8b8b8"></div>
<div class="a" style="left:1169px;top:852px;width:8px;height:6px;background:#fff;border:1px solid #b8b8b8"></div>
<div class="a" style="left:1169px;top:860px;width:8px;height:6px;background:#fff;border:1px solid #b8b8b8"></div>
<div class="a" style="left:1179px;top:836px;width:8px;height:6px;background:#fff;border:1px solid #b8b8b8"></div>
<div class="a" style="left:1179px;top:844px;width:8px;height:6px;background:#fff;border:1px solid #b8b8b8"></div>
<div class="a" style="left:1179px;top:852px;width:8px;height:6px;background:#fff;border:1px solid #b8b8b8"></div>
<div class="a" style="left:1179px;top:860px;width:8px;height:6px;background:#fff;border:1px solid #b8b8b8"></div>
<div class="t" style="left:1202.4px;top:834.19px;font-size:11px;color:#111;font-weight:400;letter-spacing:0.400px;"><b>Collection View</b></div>
<div class="t" style="left:1292.8px;top:834.19px;font-size:11px;color:#1a1a1a;font-weight:400;letter-spacing:-0.076px;">- Displays data</div>
<div class="t" style="left:1202.4px;top:846.89px;font-size:11px;color:#1a1a1a;font-weight:400;letter-spacing:0.042px;">in a collection of cells.</div>
<div class="a" style="left:1146px;top:882px;width:236px;height:1px;background:#cfcfcf"></div>
<div class="a" style="left:1142px;top:883px;width:244px;height:48px;overflow:hidden">
<div class="a" style="left:9px;top:9px;width:44px;height:50px;background:#d6d6d6;border:1px solid #a8a8a8"></div>
<div class="a" style="left:16px;top:16px;width:14px;height:14px;background:#fff;border:1px solid #a8a8a8"></div>
<div class="a" style="left:32px;top:16px;width:14px;height:14px;background:#d6d6d6;border:1px solid #b8b8b8"></div>
<div class="a" style="left:16px;top:32px;width:14px;height:14px;background:#d6d6d6;border:1px solid #b8b8b8"></div>
<div class="a" style="left:32px;top:32px;width:14px;height:14px;background:#d6d6d6;border:1px solid #b8b8b8"></div>
<div class="t" style="left:60.4px;top:7.89px;font-size:11px;color:#111;font-weight:400;letter-spacing:0.351px;"><b>Collection View Cell</b></div>
<div class="t" style="left:175px;top:7.89px;font-size:11px;color:#1a1a1a;font-weight:400;letter-spacing:0.021px;">- Defines</div>
<div class="t" style="left:60.4px;top:20.89px;font-size:11px;color:#1a1a1a;font-weight:400;letter-spacing:0.030px;">the attributes and behavior of cells</div>
<div class="t" style="left:60.4px;top:33.99px;font-size:11px;color:#1a1a1a;font-weight:400;letter-spacing:0.001px;">in a collection view.</div>
</div>
<div class="a" style="left:1142px;top:931px;width:259px;height:1px;background:#b8b8b8"></div>
<div class="a" style="left:1142px;top:932px;width:259px;height:30px;background:#fff"></div>
<svg class="a" style="left:1150px;top:940px;" width="14" height="14" viewBox="0 0 14 14"><rect x="0.6" y="0.6" width="5" height="5" fill="none" stroke="#6e6e6e" stroke-width="1.1"/><rect x="7.6" y="0.6" width="5" height="5" fill="none" stroke="#6e6e6e" stroke-width="1.1"/><rect x="0.6" y="7.6" width="5" height="5" fill="none" stroke="#6e6e6e" stroke-width="1.1"/><rect x="7.6" y="7.6" width="5" height="5" fill="none" stroke="#6e6e6e" stroke-width="1.1"/></svg>
<div class="a" style="left:1170px;top:935px;width:226px;height:22px;border:1px solid #b8b8b8;border-radius:4px;background:#fff"></div>
<svg class="a" style="left:1175px;top:939px;" width="14" height="14" viewBox="0 0 14 14"><circle cx="7.4" cy="7.4" r="5.9" fill="none" stroke="#6e6e6e" stroke-width="1.1"/><path d="M4 7.9 A3.5 3.5 0 0 1 11 7.9Z" fill="#6e6e6e"/></svg>
<div class="t" style="left:1192px;top:935.98px;font-size:11.6px;color:#9c9c9c;font-weight:400;">Filter</div></div></div></body></html>
